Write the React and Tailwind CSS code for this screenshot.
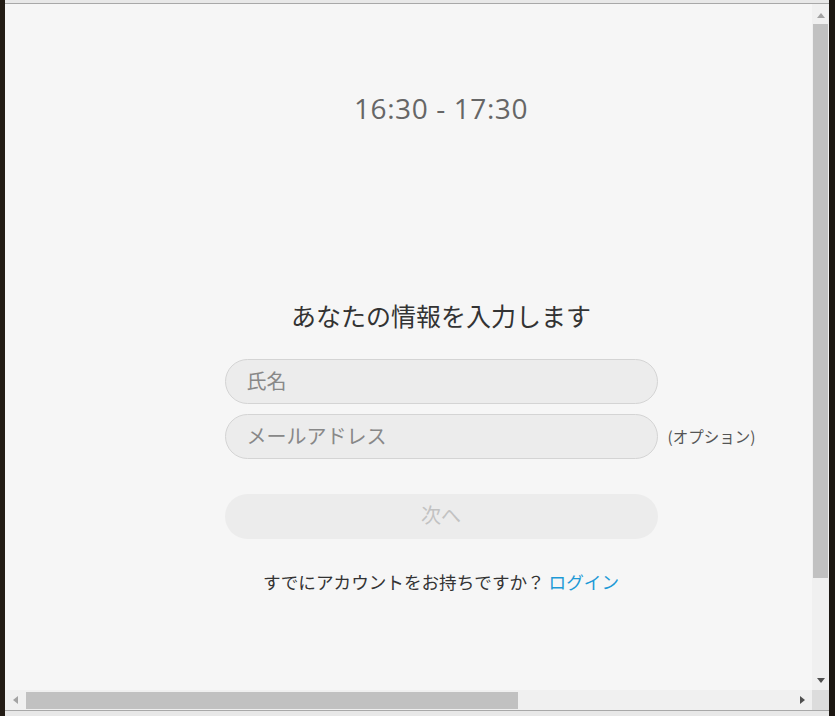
import React from "react";

const jp = { fontFamily: '"Noto Sans CJK JP", "Noto Sans", sans-serif' };

const Arrow = ({ dir, color }) => {
  const pts = {
    up: "0,6 4,1 8,6",
    down: "0,1 8,1 4,6",
    left: "6,0 6,8 1,4",
    right: "1,0 1,8 6,4",
  }[dir];
  const w = dir === "up" || dir === "down" ? 8 : 7;
  const h = dir === "up" || dir === "down" ? 7 : 8;
  return (
    <svg width={w} height={h} viewBox={`0 0 ${w} ${h}`}>
      <polygon points={pts} fill={color} />
    </svg>
  );
};

export default function App() {
  return (
    <div className="flex h-[716px] w-[835px] overflow-hidden bg-[#1c1712]">
      <div className="w-[5px] shrink-0 bg-[#231c15]" />
      <div className="flex w-[824px] shrink-0 flex-col">
        <div className="h-[3px] bg-[#e8e8e8]" />
        <div className="h-[1px] bg-[#a8a8a8]" />
        <div className="flex h-[686px]">
          <main className="w-[807px] shrink-0 overflow-hidden bg-[#f6f6f6]" style={jp}>
            <div className="flex w-[872px] flex-col items-center">
              <div
                className="mt-[90px] text-[28px] leading-[28px] tracking-[0.6px] text-[#666]"
                style={{ fontFamily: '"Open Sans", "Noto Sans", sans-serif' }}
              >
                16:30 - 17:30
              </div>
              <h1 className="mt-[177px] text-[25px] leading-[32px] text-[#333]">
                あなたの情報を入力します
              </h1>
              <div className="mt-[28px] grid w-full grid-cols-[1fr_433px_1fr] gap-y-[10px]">
                <div />
                <input
                  placeholder="氏名"
                  className="h-[45px] w-[433px] rounded-full border border-[#d4d4d4] bg-[#ececec] px-[21px] pb-[2px] text-[20px] text-[#333] outline-none placeholder:text-[#888]"
                  style={jp}
                />
                <div />
                <div />
                <input
                  placeholder="メールアドレス"
                  className="h-[45px] w-[433px] rounded-full border border-[#d4d4d4] bg-[#ececec] px-[21px] pb-[2px] text-[20px] text-[#333] outline-none placeholder:text-[#888]"
                  style={jp}
                />
                <div className="flex items-center pl-[10px] text-[15.5px] text-[#555]">(オプション)</div>
              </div>
              <button
                className="mt-[35px] h-[45px] w-[433px] rounded-full bg-[#ececec] pb-[3px] text-[20px] text-[#c2c2c2]"
                style={jp}
              >
                次へ
              </button>
              <p className="mt-[31px] text-[17.6px] leading-[24px] text-[#333]">
                すでにアカウントをお持ちですか？ <span className="text-[#1e9ad6]">ログイン</span>
              </p>
            </div>
          </main>
          <div className="flex w-[17px] shrink-0 flex-col bg-[#f0f0f0]">
            <div className="flex h-[20px] items-center justify-center pt-[2px]">
              <Arrow dir="up" color="#a3a3a3" />
            </div>
            <div className="mx-[1px] h-[554px] bg-[#c1c1c1]" />
            <div className="flex-1" />
            <div className="flex h-[20px] items-center justify-center">
              <Arrow dir="down" color="#505050" />
            </div>
          </div>
        </div>
        <div className="flex h-[20px]">
          <div className="flex w-[807px] shrink-0 items-center bg-[#f0f0f0]">
            <div className="flex w-[21px] justify-center">
              <Arrow dir="left" color="#a3a3a3" />
            </div>
            <div className="h-[17px] w-[492px] bg-[#c1c1c1]" />
            <div className="flex-1" />
            <div className="flex w-[20px] justify-center">
              <Arrow dir="right" color="#505050" />
            </div>
          </div>
          <div className="w-[17px] bg-[#dcdcdc]" />
        </div>
        <div className="h-[1px] bg-[#a8a8a8]" />
        <div className="flex-1 bg-[#e8e8e8]" />
      </div>
      <div className="flex-1 bg-[#1c1712]" />
    </div>
  );
}
